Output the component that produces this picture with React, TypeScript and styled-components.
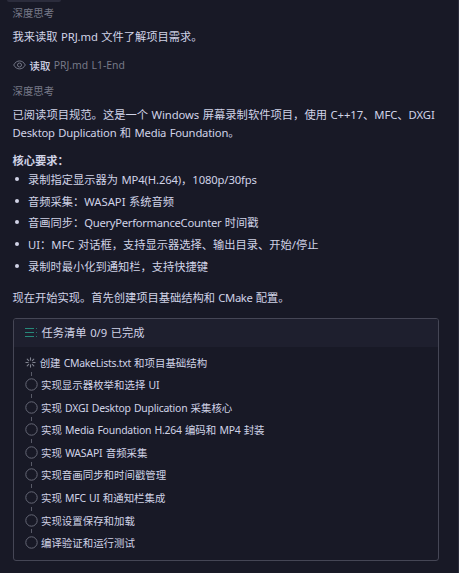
import React, { Fragment } from "react";
import styled, { createGlobalStyle } from "styled-components";

const GlobalStyle = createGlobalStyle`
  * { box-sizing: border-box; }
  body { margin: 0; background: #fff; overflow: hidden; }
`;

const Panel = styled.main`
  width: 459px;
  height: 573px;
  overflow: hidden;
  background: #181926;
  border-right: 1px solid #2a2b3a;
  padding: 0 19px 0 12.5px;
  color: #d0d3e6;
  font-family: "Noto Sans", "Noto Sans CJK SC", sans-serif;
  font-size: 11.25px;
`;

const PreviousChip = styled.div`
  width: 54px;
  height: 2px;
  margin-left: -6px;
  border-radius: 0 0 3px 3px;
  background: #2b2c3c;
`;

const Line = styled.div<{ $h: number; $mt?: number; $size?: number; $bold?: boolean; $muted?: boolean }>`
  height: ${(p) => p.$h}px;
  line-height: ${(p) => p.$h}px;
  margin-top: ${(p) => p.$mt ?? 0}px;
  font-size: ${(p) => p.$size ?? 11.25}px;
  font-weight: ${(p) => (p.$bold ? 700 : 400)};
  color: ${(p) => (p.$muted ? "#777988" : "inherit")};
  white-space: pre;
`;

const Latin = styled.span<{ $ls?: number }>`
  letter-spacing: ${(p) => p.$ls ?? -0.25}px;
  word-spacing: 0.7px;
`;

const ReadRow = styled.div`
  display: flex;
  align-items: center;
  height: 18px;
  margin-top: 10px;
  font-size: 10.4px;
  white-space: pre;
  svg { margin-right: 4px; }
`;

const ReadLabel = styled.b`
  font-weight: 500;
`;

const ReadTarget = styled.span`
  color: #777988;
`;

const Bullets = styled.ul`
  list-style: none;
  margin: -2px 0 0;
  padding: 0;
`;

const Bullet = styled.li`
  display: flex;
  align-items: center;
  height: 21.7px;
  white-space: pre;
  &::before {
    content: "";
    width: 4px;
    height: 4px;
    margin: 0 9.5px 0 2px;
    border-radius: 50%;
    background: #d0d3e6;
  }
`;

const Card = styled.section`
  width: 426px;
  height: 243px;
  margin-top: 10.5px;
  border: 1px solid #454655;
  border-radius: 3px;
  overflow: hidden;
`;

const CardHeader = styled.header`
  display: flex;
  align-items: center;
  height: 28px;
  padding: 0 0 2px 11px;
  background: #1e1f2e;
  white-space: pre;
  svg { margin-right: 4px; }
`;

const Tasks = styled.ol`
  list-style: none;
  margin: 0;
  padding: 4px 0 0 11.5px;
`;

const Task = styled.li`
  display: flex;
  align-items: center;
  height: 22.55px;
  font-size: 10.45px;
  white-space: pre;
`;

const Marker = styled.span<{ $active?: boolean }>`
  position: relative;
  display: flex;
  align-items: center;
  width: ${(p) => (p.$active ? 14.7 : 16)}px;
  height: 22.5px;
`;

const Connector = styled.i`
  position: absolute;
  left: 6px;
  top: -2px;
  width: 1px;
  height: 4px;
  background: #595b68;
`;

const EyeIcon = () => (
  <svg width="13" height="12" viewBox="0 0 13 12" fill="none" stroke="#737686">
    <path d="M.7 6C3.4.6 9.6.6 12.3 6 9.6 11.2 3.4 11.2.7 6Z" />
    <circle cx="6.5" cy="6" r="2" />
  </svg>
);

const ListIcon = () => (
  <svg width="13" height="10" viewBox="0 0 13 10" fill="#27897a" shapeRendering="crispEdges">
    <path d="M0 1h9v1H0zM0 5h9v1H0zM0 9h9v1H0z" />
    <path d="M11 1h1v1h-1zM11 5h1v1h-1zM11 9h1v1h-1z" opacity=".8" />
  </svg>
);

const SpinnerIcon = () => (
  <svg width="11" height="11" viewBox="0 0 11 11" stroke="#80838f" strokeWidth="1.1" strokeLinecap="round">
    <path d="M5.5.9v2.2M5.5 7.9v2.2M.9 5.5h2.2M7.9 5.5h2.2M2.2 2.2l1.5 1.5M7.3 7.3l1.5 1.5M2.2 8.8l1.5-1.5M7.3 3.7l1.5-1.5" />
  </svg>
);

const CircleIcon = () => (
  <svg width="13" height="13" viewBox="0 0 13 13" fill="none" stroke="#666876">
    <circle cx="6.5" cy="6.5" r="5.7" />
  </svg>
);

const Mixed = ({ text, ls }: { text: string; ls?: number }) => (
  <span>
    {text.split(/([\x20-\x7e]+)/).map((part, i) =>
      i % 2 ? <Latin key={i} $ls={ls}>{part}</Latin> : <Fragment key={i}>{part}</Fragment>,
    )}
  </span>
);

const requirements = [
  { text: "录制指定显示器为 MP4(H.264)，1080p/30fps", ls: -0.13 },
  { text: "音频采集：WASAPI 系统音频", ls: 0 },
  { text: "音画同步：QueryPerformanceCounter 时间戳", ls: -0.3 },
  { text: "UI：MFC 对话框，支持显示器选择、输出目录、开始/停止", ls: 0 },
  { text: "录制时最小化到通知栏，支持快捷键" },
];

const tasks = [
  { text: "创建 CMakeLists.txt 和项目基础结构", ls: -0.28 },
  { text: "实现显示器枚举和选择 UI", ls: -0.2 },
  { text: "实现 DXGI Desktop Duplication 采集核心", ls: -0.23 },
  { text: "实现 Media Foundation H.264 编码和 MP4 封装", ls: -0.23 },
  { text: "实现 WASAPI 音频采集", ls: -0.15 },
  { text: "实现音画同步和时间戳管理" },
  { text: "实现 MFC UI 和通知栏集成", ls: -0.25 },
  { text: "实现设置保存和加载" },
  { text: "编译验证和运行测试" },
];

export default function App() {
  return (
    <>
      <GlobalStyle />
      <Panel lang="zh-CN">
        <PreviousChip />
        <Line $h={18} $mt={2} $size={10.4} $muted>深度思考</Line>
        <Line $h={18} $mt={6}><Mixed text="我来读取 PRJ.md 文件了解项目需求。" ls={-0.1} /></Line>
        <ReadRow>
          <EyeIcon />
          <ReadLabel>读取</ReadLabel>
          <ReadTarget><Mixed text=" PRJ.md L1-End" ls={0} /></ReadTarget>
        </ReadRow>
        <Line $h={18} $mt={8} $size={10.4} $muted>深度思考</Line>
        <Line $h={18} $mt={6} $size={11.3}><Mixed text="已阅读项目规范。这是一个 Windows 屏幕录制软件项目，使用 C++17、MFC、DXGI" ls={-0.1} /></Line>
        <Line $h={18}><Mixed text="Desktop Duplication 和 Media Foundation。" ls={-0.2} /></Line>
        <Line $h={18} $mt={10} $bold>核心要求：</Line>
        <Bullets>
          {requirements.map(({ text, ls }) => <Bullet key={text}><Mixed text={text} ls={ls} /></Bullet>)}
        </Bullets>
        <Line $h={18} $mt={13}><Mixed text="现在开始实现。首先创建项目基础结构和 CMake 配置。" ls={-0.35} /></Line>
        <Card>
          <CardHeader><ListIcon /><Mixed text="任务清单 0/9 已完成" ls={0} /></CardHeader>
          <Tasks>
            {tasks.map(({ text, ls }, i) => (
              <Task key={text}>
                <Marker $active={i === 0}>
                  {i > 0 && <Connector />}
                  {i === 0 ? <SpinnerIcon /> : <CircleIcon />}
                </Marker>
                <Mixed text={text} ls={ls} />
              </Task>
            ))}
          </Tasks>
        </Card>
      </Panel>
    </>
  );
}
